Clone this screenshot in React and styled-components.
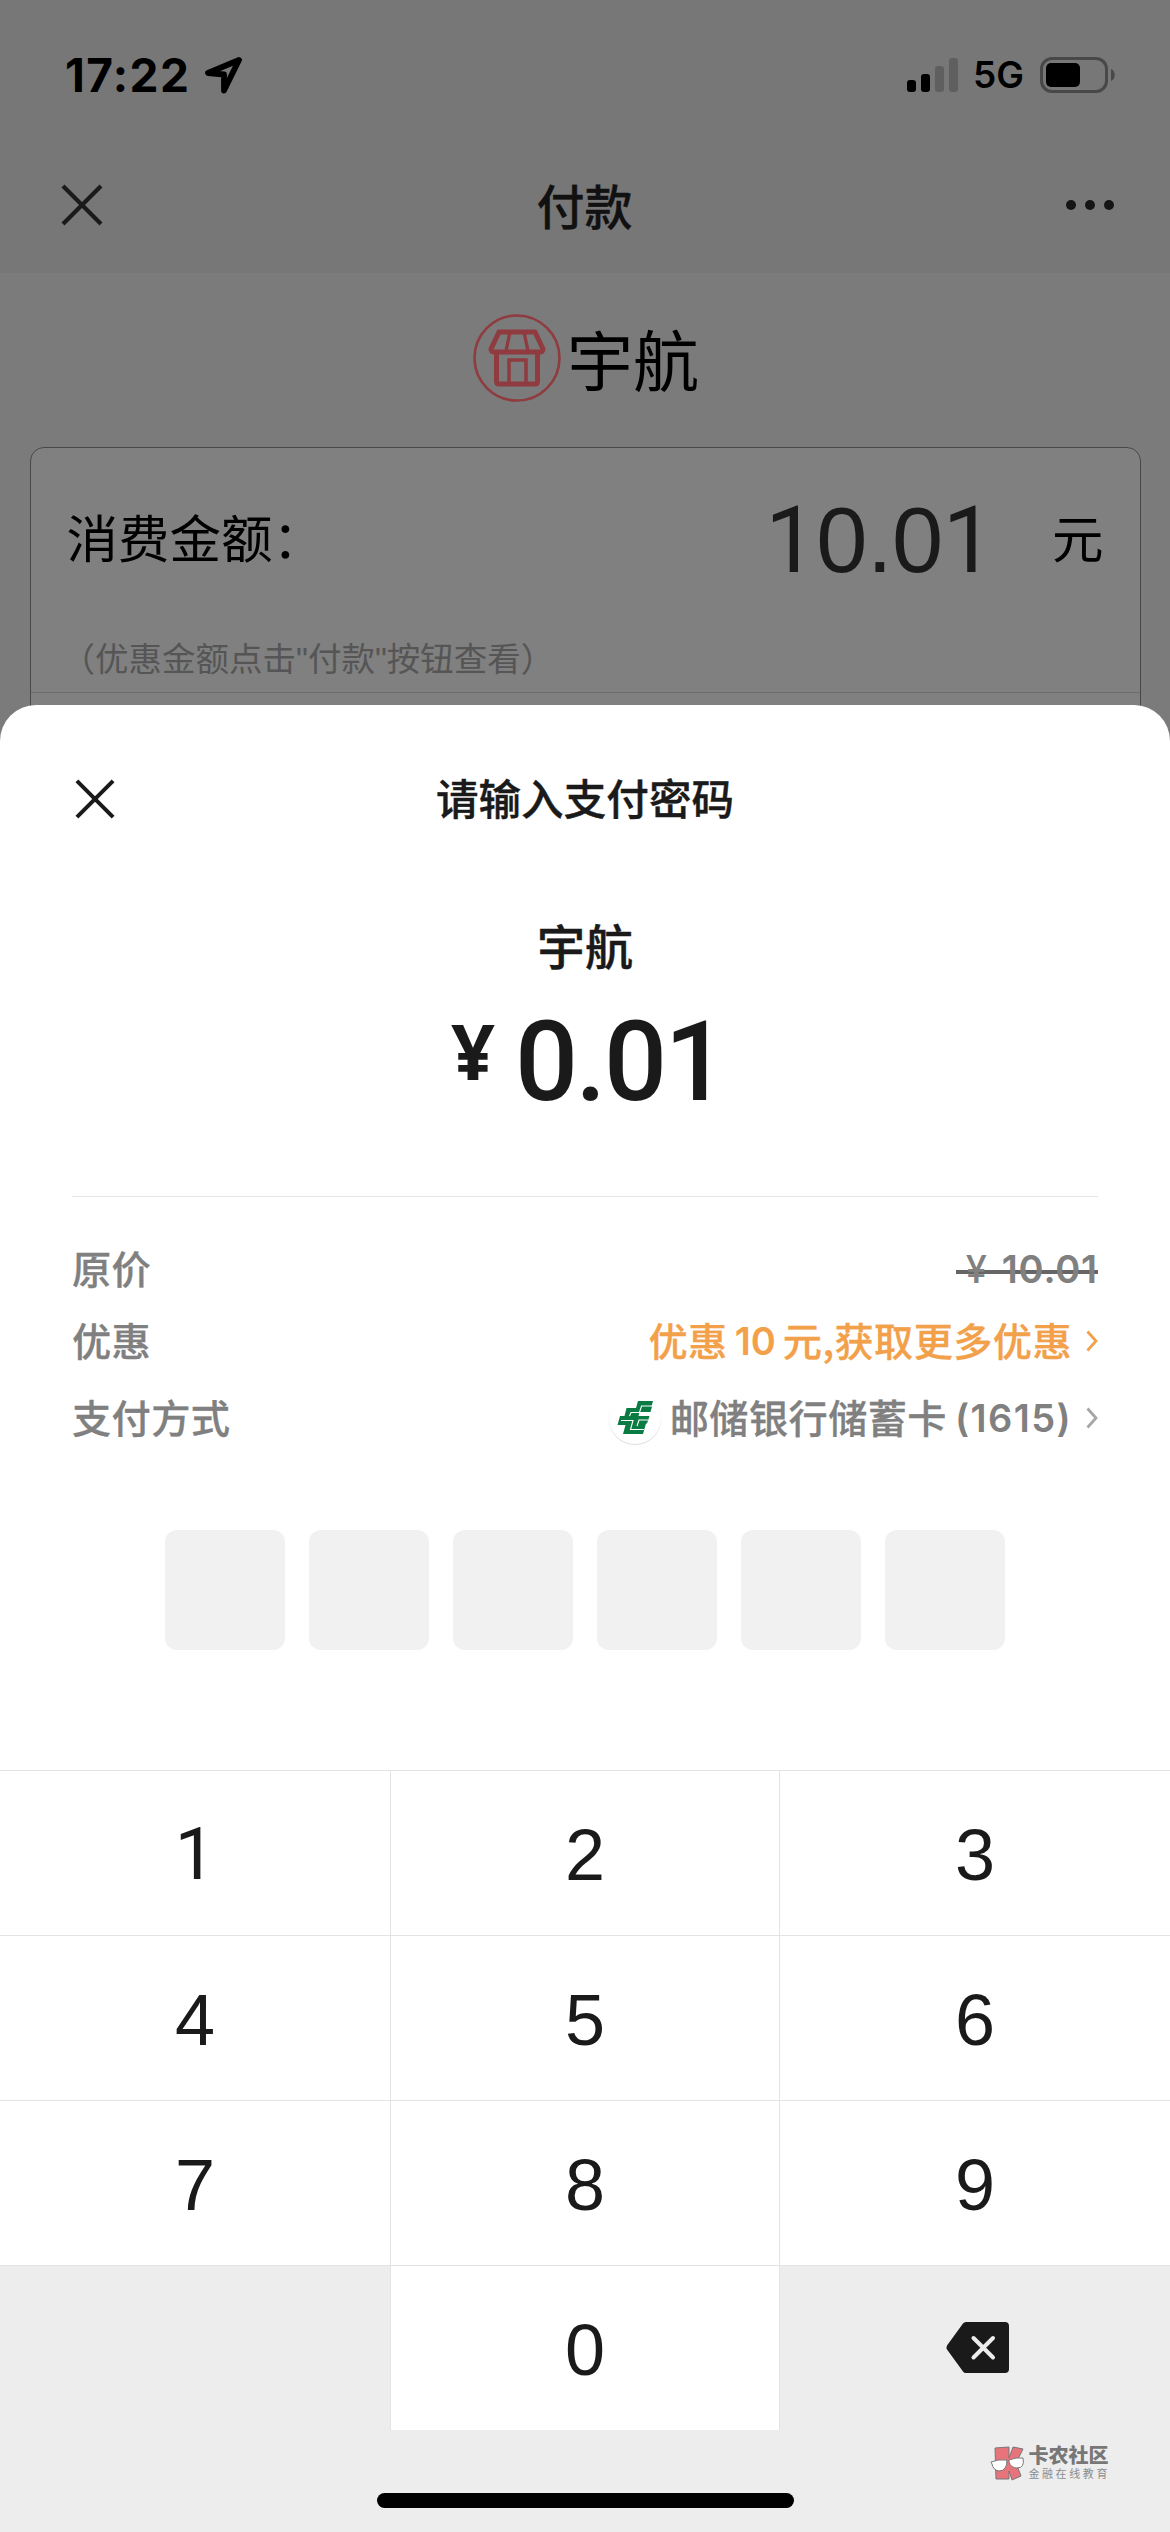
import styled, { createGlobalStyle } from "styled-components";

const keys = ["1", "2", "3", "4", "5", "6", "7", "8", "9"];

// "1" comes from Roboto, it has no foot there
const Digits = ({ value }) =>
  value
    .split("")
    .map((char, i) =>
      char === "1" ? <One key={i}>1</One> : <span key={i}>{char}</span>
    );

const CloseIcon = ({ size }) => (
  <svg width={size} height={size} viewBox="0 0 42 42" fill="none">
    <path d="M2 2L40 40M40 2L2 40" stroke="#1a1a1a" strokeWidth="4.2" />
  </svg>
);

const Arrow = ({ color }) => (
  <svg width="12" height="22" viewBox="0 0 12 22" fill="none">
    <path d="M1.5 1.5L10 11L1.5 20.5" stroke={color} strokeWidth="2.8" />
  </svg>
);

const App = () => {
  return (
    <Phone>
      <GlobalStyle />
      <TopBar>
        <StatusBar>
          <Time>17:22</Time>
          <svg width="40" height="40" viewBox="0 0 40 40" fill="none">
            <path
              d="M36 5L5 18L21 19.5V35.500Z"
              stroke="#000"
              strokeWidth="5.8"
              strokeLinejoin="round"
            />
          </svg>
          <StatusRight>
            <Signal>
              <Bar $height={12} />
              <Bar $height={18} />
              <Bar $height={26} $off />
              <Bar $height={34} $off />
            </Signal>
            <Network>5G</Network>
            <svg width="76" height="36" viewBox="0 0 76 36" fill="none">
              <rect x="1.5" y="1.5" width="65" height="33" rx="10.5" stroke="#484848" strokeWidth="3" />
              <rect x="6" y="6" width="34" height="24" rx="5" fill="#000" />
              <path d="M71 12C76 14 76 22 71 24Z" fill="#484848" />
            </svg>
          </StatusRight>
        </StatusBar>
        <NavBar>
          <CloseIcon size={42} />
          <NavTitle>付款</NavTitle>
          <Dots>
            <Dot />
            <Dot />
            <Dot />
          </Dots>
        </NavBar>
      </TopBar>

      <Shop>
        <svg width="88" height="88" viewBox="0 0 88 88" fill="none" stroke="#8f3b3f">
          <circle cx="44" cy="44" r="42.5" strokeWidth="2.6" />
          <path d="M26 18H62L70 35Q70 38 66 38H22Q18 38 18 35Z" strokeWidth="5" strokeLinejoin="round" />
          <path d="M37 18L33 37M51 18L55 37" strokeWidth="3.4" />
          <path d="M23.500 38V67Q23.500 70 26 70H62Q64.500 70 64.500 67V38" strokeWidth="5" />
          <path d="M36 69V46H53V69" strokeWidth="3.5" />
        </svg>
        <ShopName>宇航</ShopName>
      </Shop>

      <Card>
        <AmountRow>
          <AmountLabel>消费金额：</AmountLabel>
          <Amount>
            <Digits value="10.01" />
          </Amount>
          <AmountLabel>元</AmountLabel>
        </AmountRow>
        <Hint>（优惠金额点击"付款"按钮查看）</Hint>
      </Card>

      <Sheet>
        <SheetHeader>
          <CloseIcon size={40} />
          <SheetTitle>请输入支付密码</SheetTitle>
        </SheetHeader>
        <Payee>宇航</Payee>
        <Price>
          <Yen>¥</Yen>
          <PriceValue>0.01</PriceValue>
        </Price>

        <Info>
          <InfoRow $height={72}>
            <InfoLabel>原价</InfoLabel>
            <Origin>
              <OriginYen>¥</OriginYen>10.01
            </Origin>
          </InfoRow>
          <InfoRow $height={72}>
            <InfoLabel>优惠</InfoLabel>
            <InfoValue $orange>
              <InfoLabel>优惠</InfoLabel>
              <Num $gap="0 7px">10</Num>
              <InfoLabel>元,获取更多优惠</InfoLabel>
              <Arrow color="#f2a14a" />
            </InfoValue>
          </InfoRow>
          <InfoRow $height={82}>
            <InfoLabel>支付方式</InfoLabel>
            <InfoValue>
              <BankLogo>
                <svg width="36" height="34" viewBox="0 0 36 34" fill="none">
                  <path
                    d="M21 0H36L34.500 5.500H35L33.500 11H22.500L21.500 15H32.500L30 22.500H29L26 33H6L8.500 24H0.500L3 15H7.500L9.500 7H19Z"
                    fill="#0a7c43"
                  />
                  <path
                    d="M35 5H24.500L22.500 11.500H14L12.500 15M4 19.500H16L13.500 28.500H27M31 19H22L20 25"
                    stroke="#fff"
                    strokeWidth="1.1"
                  />
                </svg>
              </BankLogo>
              <InfoLabel>邮储银行储蓄卡</InfoLabel>
              <Num $gap="0 0 0 8px" $spacing={1.4}>
                (1615)
              </Num>
              <Arrow color="#a6a6a6" />
            </InfoValue>
          </InfoRow>
        </Info>

        <Password>
          {[0, 1, 2, 3, 4, 5].map((n) => (
            <PasswordBox key={n} />
          ))}
        </Password>

        <Keyboard>
          {keys.map((key) => (
            <Key key={key}>
              <Digits value={key} />
            </Key>
          ))}
          <Key $gray />
          <Key>0</Key>
          <Key $gray>
            <DeleteIcon width="63" height="51" viewBox="0 0 63 51" fill="none">
              <path
                d="M20 0H59Q63 0 63 4V47Q63 51 59 51H20Q18 51 17 49.500L1 27.500Q0 25.500 1 23.500L17 1.500Q18 0 20 0Z"
                fill="#1a1a1a"
              />
              <path d="M27.500 16L47 35.500M47 16L27.500 35.500" stroke="#ededed" strokeWidth="4" strokeLinecap="round" />
            </DeleteIcon>
          </Key>
        </Keyboard>
        <SheetFooter>
          <HomeIndicator />
        </SheetFooter>

        <Watermark>
          <svg width="35" height="35" viewBox="0 0 35 35" stroke="#777" strokeWidth="1">
            <path d="M5 2L19 1V12L23 1L33 3L26 17L31 30L22 34L19 25V33L6 33Z" fill="#e8747b" />
            <path d="M1 16Q8 13 17 14Q17 25 9 25Q3 24 2 18Z" fill="#fff" />
            <path d="M19 14Q26 11 33 12Q35 22 27 22Q21 22 19 16Z" fill="#fff" />
          </svg>
          <div>
            <Brand>卡农社区</Brand>
            <Slogan>金融在线教育</Slogan>
          </div>
        </Watermark>
      </Sheet>
    </Phone>
  );
};

export default App;

const GlobalStyle = createGlobalStyle`
  * {
    box-sizing: border-box;
  }
  body {
    margin: 0;
  }
  svg {
    display: block;
    flex-shrink: 0;
  }
`;

const Phone = styled.div`
  position: relative;
  width: 1170px;
  height: 2532px;
  overflow: hidden;
  background-color: #7b7b7b;
  color: #000;
  font-family: "Noto Sans CJK SC", sans-serif;
`;

const TopBar = styled.header`
  height: 273px;
  background-color: #777;
`;

const StatusBar = styled.div`
  display: flex;
  align-items: center;
  height: 150px;
  padding: 0 54px 0 65px;
`;

const Time = styled.div`
  width: 138px;
  font: 700 46px/60px Inter, sans-serif;
  letter-spacing: 1.4px;
`;

const StatusRight = styled.div`
  display: flex;
  align-items: center;
  margin-left: auto;
`;

const Signal = styled.div`
  display: flex;
  align-items: flex-end;
  gap: 5px;
  height: 34px;
`;

const Bar = styled.div`
  width: 9px;
  height: ${({ $height }) => $height}px;
  border-radius: 3px;
  background-color: ${({ $off }) => ($off ? "#5f5f5f" : "#000")};
`;

const Network = styled.div`
  width: 67px;
  margin-left: 15px;
  font: 600 37px/50px Inter, sans-serif;
`;

const NavBar = styled.div`
  display: flex;
  align-items: center;
  justify-content: space-between;
  height: 110px;
  padding: 0 56px 0 61px;
`;

const NavTitle = styled.h1`
  margin: 0;
  padding-bottom: 3px;
  font-size: 48px;
  font-weight: 500;
  line-height: 70px;
  color: #111;
  -webkit-text-stroke: 0.3px #111;
`;

const Dots = styled.div`
  display: flex;
  gap: 9px;
`;

const Dot = styled.i`
  width: 10px;
  height: 10px;
  border-radius: 50%;
  background-color: #151515;
`;

const Shop = styled.div`
  display: flex;
  align-items: center;
  justify-content: center;
  gap: 6px;
  height: 174px;
  padding: 0 0 4px 2px;
`;

const ShopName = styled.div`
  padding-bottom: 3px;
  font-size: 66px;
  line-height: 90px;
`;

const Card = styled.section`
  width: 1111px;
  height: 300px;
  margin: 0 auto;
  border: 1px solid #484848;
  border-radius: 14px;
  background-color: #808080;
`;

const AmountRow = styled.div`
  display: flex;
  align-items: center;
  height: 180px;
  padding: 0 36px;
`;

const AmountLabel = styled.div`
  padding-bottom: 4px;
  font-size: 51.500px;
  line-height: 70px;
`;

const Amount = styled.div`
  margin: 4px 58px 0 auto;
  font: 92px/100px "Liberation Sans", sans-serif;
  letter-spacing: -0.5px;
  color: #1a1a1a;
`;

const One = styled.span`
  font-family: Roboto, sans-serif;
`;

const Hint = styled.div`
  height: 65px;
  padding-left: 31px;
  border-bottom: 1px solid #6c6c6c;
  font-family: "Liberation Sans", "Noto Sans CJK SC", sans-serif;
  font-size: 33.500px;
  line-height: 63px;
  color: #555;
`;

const Sheet = styled.section`
  position: absolute;
  bottom: 0;
  left: 0;
  display: flex;
  flex-direction: column;
  width: 1170px;
  height: 1827px;
  border-radius: 36px 36px 0 0;
  background-color: #fff;
  color: #1a1a1a;
`;

const SheetHeader = styled.div`
  display: grid;
  grid-template-columns: 40px 1fr 40px;
  align-items: center;
  height: 188px;
  padding: 0 75px;
`;

const SheetTitle = styled.h2`
  margin: 0;
  padding-bottom: 4px;
  font-size: 42.600px;
  font-weight: 500;
  line-height: 60px;
  text-align: center;
  -webkit-text-stroke: 0.4px #1a1a1a;
`;

const Payee = styled.div`
  height: 108px;
  font-size: 48px;
  font-weight: 500;
  line-height: 102px;
  text-align: center;
  -webkit-text-stroke: 0.4px #1a1a1a;
`;

const Price = styled.div`
  display: flex;
  justify-content: center;
  height: 195px;
  padding: 1px 0 0 6px;
`;

const Yen = styled.div`
  margin-right: 20px;
  font: 700 77px/98px "Open Sans", sans-serif;
`;

const PriceValue = styled.div`
  font: 500 111px/120px Roboto, sans-serif;
  letter-spacing: -2.500px;
`;

const Info = styled.div`
  height: 334px;
  margin: 0 72px;
  padding-top: 36px;
  border-top: 1px solid #e5e5e5;
`;

const InfoRow = styled.div`
  display: flex;
  align-items: center;
  justify-content: space-between;
  height: ${({ $height }) => $height}px;
  line-height: 60px;
  color: #808080;
`;

const InfoLabel = styled.span`
  padding-bottom: 4px;
  font-size: 39.200px;
  font-weight: 500;
  letter-spacing: 0.4px;
  -webkit-text-stroke: 0.3px currentColor;
`;

const InfoValue = styled.div`
  display: flex;
  align-items: center;
  color: ${({ $orange }) => ($orange ? "#f2a14a" : "#808080")};

  & > svg {
    margin-left: 14px;
  }
`;

const Num = styled.span`
  margin: ${({ $gap }) => $gap};
  font-family: Inter, sans-serif;
  font-size: 38px;
  font-weight: 600;
  letter-spacing: ${({ $spacing = 0 }) => $spacing}px;
`;

const Origin = styled.div`
  display: flex;
  align-items: center;
  padding-left: 10px;
  font: 600 38px/60px Inter, sans-serif;
  letter-spacing: 0.8px;
  background: linear-gradient(#666, #666) 0 31px / 100% 4px no-repeat;
`;

const OriginYen = styled.span`
  margin-right: 14px;
  font-weight: 500;
`;

const BankLogo = styled.div`
  display: flex;
  align-items: center;
  justify-content: center;
  width: 52px;
  height: 52px;
  margin-right: 9px;
  border-radius: 50%;
  box-shadow: 0 1px 1px #ddd;
`;

const Password = styled.div`
  display: flex;
  justify-content: center;
  gap: 24px;
  height: 240px;
`;

const PasswordBox = styled.div`
  width: 120px;
  height: 120px;
  border-radius: 12px;
  background-color: #f1f1f1;
`;

const Keyboard = styled.div`
  display: grid;
  grid-template-columns: repeat(3, 390px);
  grid-auto-rows: 165px;
`;

const Key = styled.div`
  display: flex;
  align-items: center;
  justify-content: center;
  padding-top: 3px;
  border-top: 1px solid #e3e3e3;
  background-color: ${({ $gray }) => ($gray ? "#ededed" : "#fff")};
  font: 72px/100px "Liberation Sans", sans-serif;

  &:nth-child(3n + 2) {
    border-right: 1px solid #e3e3e3;
    border-left: 1px solid #e3e3e3;
  }
`;

const DeleteIcon = styled.svg`
  margin: 0 0 4px 4px;
`;

const SheetFooter = styled.div`
  display: flex;
  align-items: flex-end;
  justify-content: center;
  flex: 1;
  padding-bottom: 24px;
  background-color: #ededed;
`;

const HomeIndicator = styled.div`
  width: 417px;
  height: 15px;
  border-radius: 8px;
  background-color: #000;
`;

const Watermark = styled.div`
  position: absolute;
  right: 60px;
  bottom: 51px;
  display: flex;
  align-items: center;
  gap: 3px;
`;

const Brand = styled.div`
  font-size: 20px;
  font-weight: 900;
  line-height: 20px;
  color: #777;
`;

const Slogan = styled.div`
  font-size: 11px;
  letter-spacing: 2.600px;
  line-height: 16px;
  white-space: nowrap;
  color: #8c8c8c;
`;
